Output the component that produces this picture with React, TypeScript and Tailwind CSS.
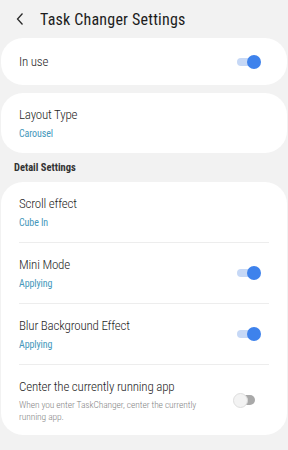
import React from 'react';

const font = { fontFamily: '"Roboto Condensed", "Liberation Sans Narrow", "DejaVu Sans Condensed", Roboto, sans-serif' };

const Toggle: React.FC<{ on: boolean }> = ({ on }) => {
  if (on) {
    return (
      <div className="relative w-[24px] h-[16px] flex items-center">
        <div className="absolute left-0 w-[20px] h-[8px] rounded-full bg-[#c6d8f6]" />
        <div className="absolute right-0 w-[14px] h-[14px] rounded-full bg-[#3e82ec]" />
      </div>
    );
  }
  return (
    <div className="relative w-[28px] h-[16px] flex items-center">
      <div className="absolute right-[6px] w-[14px] h-[10px] rounded-full bg-[#a9a9a9]" />
      <div className="absolute left-0 w-[15px] h-[15px] rounded-full bg-[#f3f3f3] border border-[#dedede]" />
    </div>
  );
};

interface RowProps {
  title: string;
  sub?: string;
  desc?: string;
  toggle?: boolean;
  className?: string;
}

const Row: React.FC<RowProps> = ({ title, sub, desc, toggle, className }) => (
  <div className={`flex items-center justify-between pl-[18px] pr-[26px] ${className ?? ''}`}>
    <div className="flex flex-col">
      <div className="text-[13px] leading-[18px] font-light tracking-[-0.2px] text-[#1f1f1f]">{title}</div>
      {sub && (
        <div className="text-[10px] leading-[14px] mt-[3px] font-normal tracking-[-0.1px] text-[#4597bb]">{sub}</div>
      )}
      {desc && (
        <div className="text-[9.5px] leading-[12px] mt-[3px] font-light tracking-[-0.1px] text-[#858585] w-[190px]">
          {desc}
        </div>
      )}
    </div>
    {toggle !== undefined && <Toggle on={toggle} />}
  </div>
);

const Divider = () => <div className="mx-[18px] h-px bg-[#ededed]" />;

export default function App() {
  return (
    <div className="w-[288px] h-[450px] bg-[#f2f2f2] overflow-hidden" style={font}>
      <div className="h-[38px] flex items-center">
        <svg width="10" height="14" viewBox="0 0 10 14" className="ml-[15px]">
          <path d="M7.5 1.5 L2.5 7 L7.5 12.5" stroke="#2a2a2a" strokeWidth="1.3" fill="none" />
        </svg>
        <div className="ml-[15px] mt-[2px] text-[16px] font-normal tracking-[0.2px] text-[#1c1c1c]">Task Changer Settings</div>
      </div>

      <div className="mx-[1px] bg-white rounded-[22px]">
        <Row title="In use" toggle={true} className="h-[47px]" />
      </div>

      <div className="mx-[1px] mt-[8px] bg-white rounded-[22px]">
        <Row title="Layout Type" sub="Carousel" className="h-[60px]" />
      </div>

      <div className="h-[29px] flex items-center pl-[14px] text-[10.5px] font-bold text-[#333333]">
        Detail Settings
      </div>

      <div className="mx-[1px] bg-white rounded-[22px]">
        <Row title="Scroll effect" sub="Cube In" className="h-[60px]" />
        <Divider />
        <Row title="Mini Mode" sub="Applying" toggle={true} className="h-[60px]" />
        <Divider />
        <Row title="Blur Background Effect" sub="Applying" toggle={true} className="h-[60px]" />
        <Divider />
        <Row
          title="Center the currently running app"
          desc="When you enter TaskChanger, center the currently running app."
          toggle={false}
          className="h-[70px]"
        />
      </div>
    </div>
  );
}
